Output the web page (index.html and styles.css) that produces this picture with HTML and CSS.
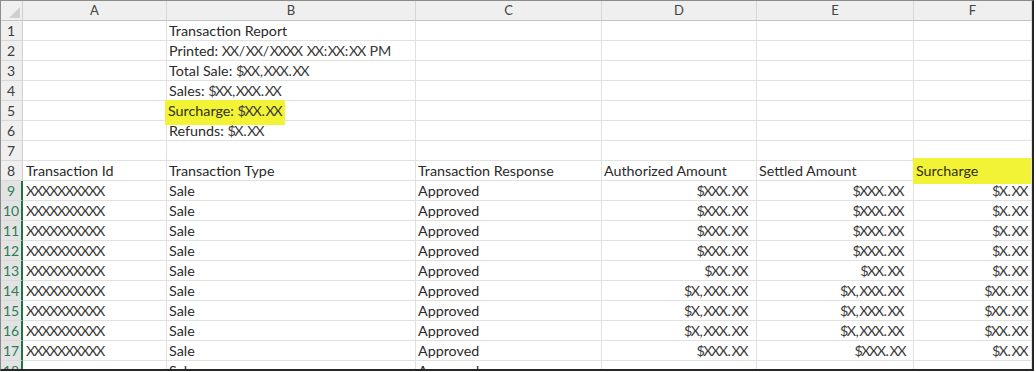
FILE: index.html
```html
<!DOCTYPE html>
<html>
<head>
<meta charset="utf-8">
<link rel="stylesheet" href="styles.css">
</head>
<body>
<div class="frame">
  <div class="sheet">
    <div class="corner"><svg width="22" height="20" viewBox="0 0 22 20"><polygon points="19,6 19,17 8,17" fill="#cfcfcf"/></svg></div>
    <div class="h">A</div><div class="h">B</div><div class="h">C</div><div class="h">D</div><div class="h">E</div><div class="h">F</div>

    <div class="r">1</div><div class="c a"></div><div class="c b">Transaction Report</div><div class="c"></div><div class="c"></div><div class="c"></div><div class="c"></div>
    <div class="r">2</div><div class="c a"></div><div class="c b">Printed: <span class="xs">XX<span class="p">/</span>XX<span class="p">/</span>XXXX<span class="p"> </span>XX<span class="p">:</span>XX<span class="p">:</span>XX<span class="p"> PM</span></span></div><div class="c"></div><div class="c"></div><div class="c"></div><div class="c"></div>
    <div class="r">3</div><div class="c a"></div><div class="c b">Total Sale: <span class="xs">$XX<span class="p">,</span>XXX<span class="p">.</span>XX</span></div><div class="c"></div><div class="c"></div><div class="c"></div><div class="c"></div>
    <div class="r">4</div><div class="c a"></div><div class="c b">Sales: <span class="xs">$XX<span class="p">,</span>XXX<span class="p">.</span>XX</span></div><div class="c"></div><div class="c"></div><div class="c"></div><div class="c"></div>
    <div class="r">5</div><div class="c a"></div><div class="c b"><span class="hl">Surcharge: <span class="xs">$XX<span class="p">.</span>XX</span></span></div><div class="c"></div><div class="c"></div><div class="c"></div><div class="c"></div>
    <div class="r">6</div><div class="c a"></div><div class="c b">Refunds: <span class="xs">$X<span class="p">.</span>XX</span></div><div class="c"></div><div class="c"></div><div class="c"></div><div class="c"></div>
    <div class="r">7</div><div class="c a"></div><div class="c b"></div><div class="c"></div><div class="c"></div><div class="c"></div><div class="c"></div>
    <div class="r">8</div><div class="c a">Transaction Id</div><div class="c b">Transaction Type</div><div class="c">Transaction Response</div><div class="c">Authorized Amount</div><div class="c">Settled Amount</div><div class="c f8"><span class="hlf">Surcharge</span></div>

    <div class="r s">9</div><div class="c a x">XXXXXXXXXX</div><div class="c b">Sale</div><div class="c">Approved</div><div class="c n d x">$XXX<span class="p">.</span>XX</div><div class="c n e x">$XXX<span class="p">.</span>XX</div><div class="c n f x">$X<span class="p">.</span>XX</div>
    <div class="r s">10</div><div class="c a x">XXXXXXXXXX</div><div class="c b">Sale</div><div class="c">Approved</div><div class="c n d x">$XXX<span class="p">.</span>XX</div><div class="c n e x">$XXX<span class="p">.</span>XX</div><div class="c n f x">$X<span class="p">.</span>XX</div>
    <div class="r s">11</div><div class="c a x">XXXXXXXXXX</div><div class="c b">Sale</div><div class="c">Approved</div><div class="c n d x">$XXX<span class="p">.</span>XX</div><div class="c n e x">$XXX<span class="p">.</span>XX</div><div class="c n f x">$X<span class="p">.</span>XX</div>
    <div class="r s">12</div><div class="c a x">XXXXXXXXXX</div><div class="c b">Sale</div><div class="c">Approved</div><div class="c n d x">$XXX<span class="p">.</span>XX</div><div class="c n e x">$XXX<span class="p">.</span>XX</div><div class="c n f x">$X<span class="p">.</span>XX</div>
    <div class="r s">13</div><div class="c a x">XXXXXXXXXX</div><div class="c b">Sale</div><div class="c">Approved</div><div class="c n d x">$XX<span class="p">.</span>XX</div><div class="c n e x">$XX<span class="p">.</span>XX</div><div class="c n f x">$X<span class="p">.</span>XX</div>
    <div class="r s">14</div><div class="c a x">XXXXXXXXXX</div><div class="c b">Sale</div><div class="c">Approved</div><div class="c n d x">$X<span class="p">,</span>XXX<span class="p">.</span>XX</div><div class="c n e x">$X<span class="p">,</span>XXX<span class="p">.</span>XX</div><div class="c n f x">$XX<span class="p">.</span>XX</div>
    <div class="r s">15</div><div class="c a x">XXXXXXXXXX</div><div class="c b">Sale</div><div class="c">Approved</div><div class="c n d x">$X<span class="p">,</span>XXX<span class="p">.</span>XX</div><div class="c n e x">$X<span class="p">,</span>XXX<span class="p">.</span>XX</div><div class="c n f x">$XX<span class="p">.</span>XX</div>
    <div class="r s">16</div><div class="c a x">XXXXXXXXXX</div><div class="c b">Sale</div><div class="c">Approved</div><div class="c n d x">$X<span class="p">,</span>XXX<span class="p">.</span>XX</div><div class="c n e x">$X<span class="p">,</span>XXX<span class="p">.</span>XX</div><div class="c n f x">$XX<span class="p">.</span>XX</div>
    <div class="r s">17</div><div class="c a x">XXXXXXXXXX</div><div class="c b">Sale</div><div class="c">Approved</div><div class="c n d x">$XXX<span class="p">.</span>XX</div><div class="c n e2 x">$XXX<span class="p">.</span>XX</div><div class="c n f x">$X<span class="p">.</span>XX</div>
    <div class="r s">18</div><div class="c a"></div><div class="c b">Sale</div><div class="c">Approved</div><div class="c"></div><div class="c"></div><div class="c"></div>
  </div>
</div>
</body>
</html>
```
FILE: styles.css
```css
html, body {
  margin: 0;
  padding: 0;
  background: #ffffff;
}

.frame {
  box-sizing: border-box;
  width: 1034px;
  height: 371px;
  border-left: 1px solid #8c8c8c;
  border-top: 1px solid #8c8c8c;
  border-right: 2px solid #262626;
  border-bottom: 2px solid #262626;
  overflow: hidden;
  background: #ffffff;
}

.sheet {
  display: grid;
  grid-template-columns: 22px 144px 249px 186px 155px 157px 118px;
  grid-template-rows: 20px;
  grid-auto-rows: 20px;
  font-family: Lato, "Open Sans", sans-serif;
  font-size: 14.3px;
  color: #2a2a2a;
}

.corner {
  box-sizing: border-box;
  background: #efefef;
  border-right: 1px solid #cfcfcf;
  border-bottom: 1px solid #c4c4c4;
}
.corner svg { display: block; }

.h {
  box-sizing: border-box;
  background: #efefef;
  border-right: 1px solid #d6d6d6;
  border-bottom: 1px solid #c4c4c4;
  text-align: center;
  font-size: 13px;
  line-height: 19px;
  color: #444444;
}

.r {
  box-sizing: border-box;
  background: #efefef;
  border-right: 1px solid #cfcfcf;
  border-bottom: 1px solid #d8d8d8;
  text-align: center;
  font-size: 14px;
  line-height: 20px;
  color: #3d3d3d;
  padding-right: 1px;
}

.r.s {
  background: #e3e3e3;
  color: #2e7d58;
  border-right: 2px solid #217346;
  padding-right: 0;
}

.c {
  box-sizing: border-box;
  border-right: 1px solid #e1e1e1;
  border-bottom: 1px solid #e1e1e1;
  white-space: nowrap;
  line-height: 20px;
  padding-left: 2px;
}

.c.a { padding-left: 3px; }
.c.b { padding-left: 2px; }

.x {
  letter-spacing: -1.5px;
  color: #3a3a3a;
}

.xs {
  letter-spacing: -1.3px;
  color: #3a3a3a;
}

.p {
  letter-spacing: 0;
  padding-left: 1px;
  padding-right: 0.5px;
}

.c.n { text-align: right; padding-left: 0; }
.c.d { padding-right: 9px; }
.c.e { padding-right: 10px; }
.c.e2 { padding-right: 8px; }
.c.f { padding-right: 4px; }

.hl {
  position: relative;
  display: inline-block;
  background: #f3f336;
  margin-left: -4px;
  padding: 1px 4px 4px 3px;
  line-height: 20px;
  margin-top: -2px;
  color: #2f3010;
}

.c.f8 { padding-left: 0; }
.hlf {
  position: relative;
  display: block;
  background: #f3f336;
  margin: -3px 0 -3px -1px;
  padding: 3px 0 3px 3px;
  line-height: 20px;
  color: #2f3010;
}
```
